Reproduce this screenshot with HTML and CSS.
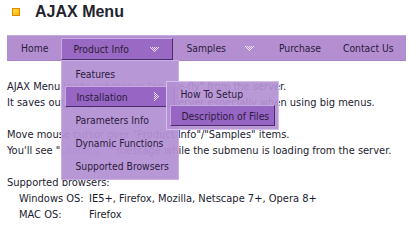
FILE: index.html
```html
<!DOCTYPE html>
<html lang="en">
<head>
    <meta charset="UTF-8">
    <meta name="viewport" content="width=device-width, initial-scale=1.0">
    <title>AJAX Menu</title>
    <link rel="stylesheet" href="styles.css">
</head>
<body>
    <header class="top">
        <span class="logo"></span>
        <h1>AJAX Menu</h1>
    </header>

    <nav class="menubar">
        <ul class="bar">
            <li class="item home">Home</li>
            <li class="item has-sub active">
                <span>Product Info</span>
                <svg class="arrow" width="9" height="5" viewBox="0 0 9 5">
                    <g fill="#fff">
                        <rect x="0" y="0" width="1" height="1"/><rect x="2" y="0" width="1" height="1"/><rect x="4" y="0" width="1" height="1"/><rect x="6" y="0" width="1" height="1"/><rect x="8" y="0" width="1" height="1"/>
                        <rect x="1" y="1" width="1" height="1"/><rect x="3" y="1" width="1" height="1"/><rect x="5" y="1" width="1" height="1"/><rect x="7" y="1" width="1" height="1"/>
                        <rect x="2" y="2" width="1" height="1"/><rect x="4" y="2" width="1" height="1"/><rect x="6" y="2" width="1" height="1"/>
                        <rect x="3" y="3" width="1" height="1"/><rect x="5" y="3" width="1" height="1"/>
                        <rect x="4" y="4" width="1" height="1"/>
                    </g>
                </svg>

                <ul class="drop">
                    <li>Features</li>
                    <li class="hover">
                        Installation
                        <svg class="arrow-r" width="5" height="9" viewBox="0 0 5 9">
                            <g fill="#fff">
                                <rect x="0" y="0" width="1" height="1"/><rect x="0" y="2" width="1" height="1"/><rect x="0" y="4" width="1" height="1"/><rect x="0" y="6" width="1" height="1"/><rect x="0" y="8" width="1" height="1"/>
                                <rect x="1" y="1" width="1" height="1"/><rect x="1" y="3" width="1" height="1"/><rect x="1" y="5" width="1" height="1"/><rect x="1" y="7" width="1" height="1"/>
                                <rect x="2" y="2" width="1" height="1"/><rect x="2" y="4" width="1" height="1"/><rect x="2" y="6" width="1" height="1"/>
                                <rect x="3" y="3" width="1" height="1"/><rect x="3" y="5" width="1" height="1"/>
                                <rect x="4" y="4" width="1" height="1"/>
                            </g>
                        </svg>
                    </li>
                    <li>Parameters Info</li>
                    <li>Dynamic Functions</li>
                    <li>Supported Browsers</li>
                </ul>

                <ul class="drop sub">
                    <li>How To Setup</li>
                    <li class="hover">Description of Files</li>
                </ul>
            </li>
            <li class="item has-sub samples">
                <span>Samples</span>
                <svg class="arrow" width="9" height="5" viewBox="0 0 9 5">
                    <g fill="#fff">
                        <rect x="0" y="0" width="1" height="1"/><rect x="2" y="0" width="1" height="1"/><rect x="4" y="0" width="1" height="1"/><rect x="6" y="0" width="1" height="1"/><rect x="8" y="0" width="1" height="1"/>
                        <rect x="1" y="1" width="1" height="1"/><rect x="3" y="1" width="1" height="1"/><rect x="5" y="1" width="1" height="1"/><rect x="7" y="1" width="1" height="1"/>
                        <rect x="2" y="2" width="1" height="1"/><rect x="4" y="2" width="1" height="1"/><rect x="6" y="2" width="1" height="1"/>
                        <rect x="3" y="3" width="1" height="1"/><rect x="5" y="3" width="1" height="1"/>
                        <rect x="4" y="4" width="1" height="1"/>
                    </g>
                </svg>
            </li>
            <li class="item purchase">Purchase</li>
            <li class="item contact">Contact Us</li>
        </ul>
    </nav>

    <div class="content">
        <p>AJAX Menu loads submenus "on-the-fly" from the server.<br>
        It saves outgoing traffic from the server especially when using big menus.</p>

        <p>Move mouse cursor over "Product Info"/"Samples" items.<br>
        You'll see "<span class="loading">Loading...</span>" message while the submenu is loading from the server.</p>

        <p>Supported browsers:</p>
        <div class="browsers">
            <span>Windows OS:</span><span>IE5+, Firefox, Mozilla, Netscape 7+, Opera 8+</span>
            <span>MAC OS:</span><span>Firefox</span>
        </div>
    </div>
</body>
</html>
```

FILE: styles.css
```css
* {
    box-sizing: border-box;
    margin: 0;
    padding: 0;
}

body {
    background: #fff;
    font-family: "DejaVu Sans Condensed", "DejaVu Sans", sans-serif;
    font-size: 11px;
    color: #1c1c30;
}

.top {
    display: flex;
    align-items: center;
    height: 30px;
    padding-left: 12px;
}

.logo {
    width: 8px;
    height: 8px;
    border: 1px solid #e08a00;
    background: linear-gradient(135deg, #ffe14a 0%, #ffb400 100%);
    margin-top: -6px;
}

h1 {
    font-family: "Liberation Sans", Arial, sans-serif;
    font-size: 16px;
    font-weight: bold;
    color: #23232f;
    margin-left: 15px;
    margin-top: -6px;
}

/* menu */
.menubar {
    margin: 5px 6px 0 7px;
    height: 26px;
    background: #b38fd2;
    border-top: 1px solid #c7aee0;
    border-bottom: 1px solid #a884c8;
}

.bar {
    list-style: none;
    display: flex;
    height: 100%;
    font-size: 10.3px;
    color: #2b1b3c;
    white-space: nowrap;
}

.item {
    position: relative;
    display: flex;
    align-items: center;
    flex-shrink: 0;
    height: 100%;
    padding: 0 13px;
}

.home { padding: 0 13px 0 14px; }

.active {
    margin-top: 2px;
    height: 22px;
    width: 112px;
    padding: 0 13px 0 11px;
    background: #9a69c3;
    border-top: 1px solid #c8aee2;
    border-left: 1px solid #c8aee2;
    border-right: 1px solid #4b2b69;
    border-bottom: 1px solid #4b2b69;
}

.arrow {
    opacity: 0.8;
    margin-left: auto;
}

.samples { padding: 0 12px 0 13px; }
.samples .arrow { margin-left: 19px; }

.purchase { padding: 0 10px 0 13px; }
.contact { flex-shrink: 1; padding: 0 8px 0 12px; }

/* dropdowns */
.drop {
    position: absolute;
    left: -1px;
    top: 21px;
    width: 118px;
    list-style: none;
    padding: 1px 3px 2px;
    background: rgba(180, 144, 212, 0.94);
    border: 1px solid rgba(205, 182, 228, 0.8);
    z-index: 2;
}

.drop li {
    position: relative;
    display: flex;
    align-items: center;
    height: 23px;
    padding-left: 10px;
}

.drop .hover {
    background: rgba(150, 100, 196, 0.97);
    border-top: 1px solid #c5a9df;
    border-left: 1px solid #c5a9df;
    border-bottom: 1px solid #4b2b69;
    border-right: 1px solid #4b2b69;
    height: 21px;
    margin: 1px 0;
}

.arrow-r {
    opacity: 0.8;
    margin-left: auto;
    margin-right: 15px;
}

.sub {
    left: 104px;
    top: 42px;
    width: 113px;
    padding: 2px 3px;
    border: 1px solid rgba(215, 196, 234, 0.9);
    background: rgba(180, 144, 212, 0.92);
    z-index: 3;
}

.sub li {
    height: 20px;
}

/* body text */
.content {
    padding: 18px 7px 0;
    line-height: 16px;
}

.content p {
    margin-bottom: 16px;
}

.content p:nth-of-type(3) {
    margin-bottom: 0;
}

.loading {
    color: #5b86c4;
}

.browsers {
    display: grid;
    grid-template-columns: 70px auto;
    padding-left: 12px;
}
```
